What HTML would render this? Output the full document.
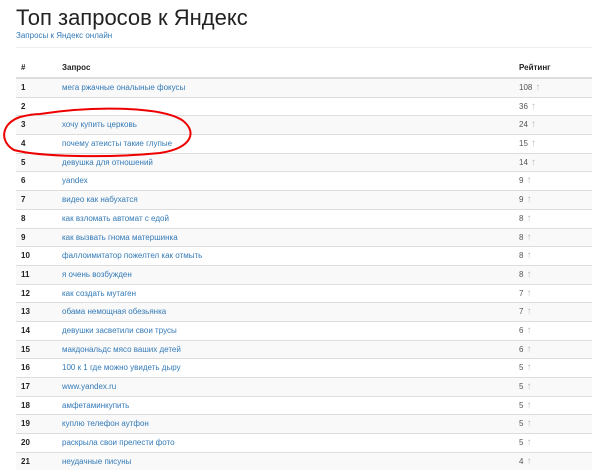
<!DOCTYPE html>
<html><head><meta charset="utf-8"><style>
body{margin:0;width:600px;height:466px;overflow:hidden;background:#fff;font-family:"Liberation Sans","DejaVu Sans",sans-serif;color:#333}
h1{position:absolute;left:16px;top:5px;margin:0;font-weight:normal;font-size:22px;color:#222}
.sub{position:absolute;left:16px;top:31px;font-size:8px;color:#337ab7}
.hr{position:absolute;left:16px;width:576px;top:47px;border-top:1px solid #eee}
.t{position:absolute;left:16px;top:59px;width:576px}
.r{position:relative;height:18.7px;border-top:1px solid #ddd;box-sizing:border-box;font-size:8px;line-height:17.7px}
.r:nth-child(even){background:#f9f9f9}
.h{height:19px;border-top:none;border-bottom:1.5px solid #ddd;font-weight:bold;color:#222;background:#fff!important}
.n{position:absolute;left:5px;font-weight:bold;color:#222}
.q{position:absolute;left:46px;color:#337ab7}
.s{position:absolute;left:503px;color:#555}
.s i{font-style:normal;font-weight:bold;font-size:10px;color:#bbb;margin-left:3px}
</style></head><body>
<h1>Топ запросов к Яндекс</h1>
<div class="sub">Запросы к Яндекс онлайн</div>
<div class="hr"></div>
<div class="t">
<div class="r h"><span class="n">#</span><span class="q" style="color:#222">Запрос</span><span class="s" style="color:#222">Рейтинг</span></div>
<div class="r"><span class="n">1</span><span class="q">мега ржачные оналыные фокусы</span><span class="s">108<i>↑</i></span></div>
<div class="r"><span class="n">2</span><span class="q"></span><span class="s">36<i>↑</i></span></div>
<div class="r"><span class="n">3</span><span class="q">хочу купить церковь</span><span class="s">24<i>↑</i></span></div>
<div class="r"><span class="n">4</span><span class="q">почему атеисты такие глупые</span><span class="s">15<i>↑</i></span></div>
<div class="r"><span class="n">5</span><span class="q">девушка для отношений</span><span class="s">14<i>↑</i></span></div>
<div class="r"><span class="n">6</span><span class="q">yandex</span><span class="s">9<i>↑</i></span></div>
<div class="r"><span class="n">7</span><span class="q">видео как набухатся</span><span class="s">9<i>↑</i></span></div>
<div class="r"><span class="n">8</span><span class="q">как взломать автомат с едой</span><span class="s">8<i>↑</i></span></div>
<div class="r"><span class="n">9</span><span class="q">как вызвать гнома матершинка</span><span class="s">8<i>↑</i></span></div>
<div class="r"><span class="n">10</span><span class="q">фаллоимитатор пожелтел как отмыть</span><span class="s">8<i>↑</i></span></div>
<div class="r"><span class="n">11</span><span class="q">я очень возбужден</span><span class="s">8<i>↑</i></span></div>
<div class="r"><span class="n">12</span><span class="q">как создать мутаген</span><span class="s">7<i>↑</i></span></div>
<div class="r"><span class="n">13</span><span class="q">обама немощная обезьянка</span><span class="s">7<i>↑</i></span></div>
<div class="r"><span class="n">14</span><span class="q">девушки засветили свои трусы</span><span class="s">6<i>↑</i></span></div>
<div class="r"><span class="n">15</span><span class="q">макдональдс мясо ваших детей</span><span class="s">6<i>↑</i></span></div>
<div class="r"><span class="n">16</span><span class="q">100 к 1 где можно увидеть дыру</span><span class="s">5<i>↑</i></span></div>
<div class="r"><span class="n">17</span><span class="q">www.yandex.ru</span><span class="s">5<i>↑</i></span></div>
<div class="r"><span class="n">18</span><span class="q">амфетаминкупить</span><span class="s">5<i>↑</i></span></div>
<div class="r"><span class="n">19</span><span class="q">куплю телефон аутфон</span><span class="s">5<i>↑</i></span></div>
<div class="r"><span class="n">20</span><span class="q">раскрыла свои прелести фото</span><span class="s">5<i>↑</i></span></div>
<div class="r"><span class="n">21</span><span class="q">неудачные писуны</span><span class="s">4<i>↑</i></span></div>
</div>
<svg style="position:absolute;left:0;top:0" width="600" height="466"><path d="M40 114 C90 106 160 106 182 120 C198 132 192 148 160 153 C110 158 40 157 14 150 C0 142 0 124 20 117 C28 115 34 114 40 114" fill="none" stroke="#e00" stroke-width="2"/></svg>
</body></html>
